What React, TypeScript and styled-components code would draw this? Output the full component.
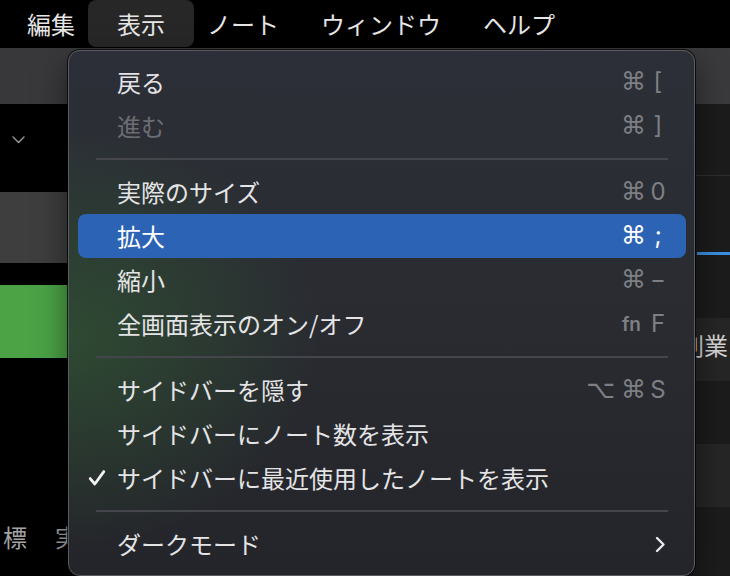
import React from "react";
import styled, { createGlobalStyle, css } from "styled-components";

const GlobalStyle = createGlobalStyle`
  html, body { margin: 0; padding: 0; background: #000; }
  body {
    font-family: "Noto Sans CJK JP", "Noto Sans", sans-serif;
    -webkit-font-smoothing: antialiased;
  }
  #root { height: 576px; }
`;

const Screen = styled.div`
  position: relative;
  width: 730px;
  height: 576px;
  overflow: hidden;
  display: grid;
  grid-template-rows: 48px 56px 1fr;
  background: #000;
`;

const MenuBar = styled.nav`
  display: flex;
  align-items: flex-start;
  padding-left: 6px;
  background: #000;
`;

const BarItem = styled.div<{ $active?: boolean }>`
  padding: 0 21px;
  font-size: 24px;
  line-height: 47px;
  height: 47px;
  color: #e6e6e6;
  border-radius: 8px;
  white-space: nowrap;
  ${(p) =>
    p.$active &&
    css`
      padding: 0 29px;
      margin: 0 -8px;
      background: #272727;
    `}
`;

const Toolbar = styled.div`
  background: linear-gradient(90deg, #38383a 0%, #3d3d3f 40%, #3a3a3c 100%);
`;

const Body = styled.div`
  display: grid;
  grid-template-columns: 300px 1fr;
  min-height: 0;
`;

const Sidebar = styled.aside`
  display: flex;
  flex-direction: column;
  background: #000;
`;

const SidebarHeader = styled.div`
  height: 88px;
  padding: 21px 0 0 12px;
  box-sizing: border-box;
`;

const SidebarBlock = styled.div<{ $tone: "gray" | "green"; $h: number }>`
  height: ${(p) => p.$h}px;
  background: ${(p) => (p.$tone === "gray" ? "#3e3e3e" : "#4ba346")};
`;

const Spacer = styled.div<{ $h: number }>`
  height: ${(p) => p.$h}px;
`;

const TagRow = styled.div`
  margin-top: auto;
  padding: 0 0 15px 3px;
  display: flex;
  gap: 28px;
  font-size: 24px;
  line-height: 48px;
  color: #a3a3a3;
`;

const Content = styled.section`
  display: flex;
  flex-direction: column;
  background: #1c1c1c;
`;

const ContentHeader = styled.div`
  height: 71px;
  border-bottom: 1px solid #2f2f2f;
`;

const TabArea = styled.div`
  height: 142px;
  padding-top: 76px;
  box-sizing: border-box;
`;

const TabUnderline = styled.div`
  height: 3px;
  margin-left: 397px;
  background: #3b8fe2;
`;

const ListRow = styled.div<{ $alt?: boolean }>`
  height: 63px;
  padding: 10px 0 0 20px;
  box-sizing: border-box;
  background: ${(p) => (p.$alt ? "#262626" : "#1c1c1c")};
  font-size: 24px;
  line-height: 34px;
  color: #d6d6d6;
  white-space: nowrap;
  overflow: hidden;
`;

const Menu = styled.div`
  position: absolute;
  left: 68px;
  top: 50px;
  width: 627px;
  height: 526px;
  box-sizing: border-box;
  padding: 9px 0;
  border: 1px solid #5b5c61;
  border-radius: 12px;
  background:
    radial-gradient(ellipse 250px 210px at 0px 285px, rgba(52, 112, 52, 0.45), rgba(52, 110, 52, 0) 100%),
    linear-gradient(180deg, #2c2f37 0%, #2a2c32 45%, #24252a 100%);
  box-shadow: 0 0 0 1px rgba(0, 0, 0, 0.75), 0 12px 32px rgba(0, 0, 0, 0.5);
  display: flex;
  flex-direction: column;
`;

const Row = styled.div<{ $highlighted?: boolean; $disabled?: boolean }>`
  height: 44px;
  flex: none;
  margin: 0 8px 0 9px;
  padding: 0 19px 0 10px;
  display: flex;
  align-items: center;
  border-radius: 8px;
  font-size: 24px;
  color: ${(p) => (p.$disabled ? "#6c6d72" : "#e4e4e6")};
  background: ${(p) => (p.$highlighted ? "#2c63b4" : "transparent")};
  ${(p) => p.$highlighted && css`color: #ffffff;`}
`;

const Check = styled.span`
  width: 29px;
  flex: none;
  display: flex;
  align-items: center;
`;

const Label = styled.span`
  white-space: nowrap;
  line-height: 44px;
  margin-right: auto;
`;

const Separator = styled.div`
  flex: none;
  height: 2px;
  margin: 10px 26px 10px 27px;
  background: #45464b;
`;

const Shortcut = styled.span<{ $on?: boolean }>`
  display: flex;
  align-items: center;
  gap: 3px;
  height: 44px;
  color: ${(p) => (p.$on ? "#ffffff" : "#7e7f84")};
`;

const Mods = styled.span`
  display: flex;
  align-items: center;
  gap: 6px;
  font-family: "DejaVu Sans", sans-serif;
  font-size: 25px;
  line-height: 30px;
`;

const Fn = styled.span`
  font-family: "Inter", "Liberation Sans", sans-serif;
  font-size: 19px;
  font-weight: 600;
  line-height: 30px;
  padding-top: 2px;
  margin-right: 5px;
`;

const Key = styled.span`
  width: 18px;
  text-align: center;
  font-family: "Inter", "Liberation Sans", sans-serif;
  font-size: 24px;
  line-height: 30px;
`;

const ChevronCell = styled.span`
  width: 18px;
  display: flex;
  justify-content: flex-end;
  padding-right: 1px;
`;

type Item = {
  label: string;
  mods?: string[];
  fn?: boolean;
  keyChar?: string;
  disabled?: boolean;
  highlighted?: boolean;
  checked?: boolean;
  submenu?: boolean;
};

const groups: Item[][] = [
  [
    { label: "戻る", mods: ["⌘"], keyChar: "[" },
    { label: "進む", mods: ["⌘"], keyChar: "]", disabled: true },
  ],
  [
    { label: "実際のサイズ", mods: ["⌘"], keyChar: "0" },
    { label: "拡大", mods: ["⌘"], keyChar: ";", highlighted: true },
    { label: "縮小", mods: ["⌘"], keyChar: "−" },
    { label: "全画面表示のオン/オフ", fn: true, keyChar: "F" },
  ],
  [
    { label: "サイドバーを隠す", mods: ["⌥", "⌘"], keyChar: "S" },
    { label: "サイドバーにノート数を表示" },
    { label: "サイドバーに最近使用したノートを表示", checked: true },
  ],
  [{ label: "ダークモード", submenu: true }],
];

const CheckIcon = () => (
  <svg width="18" height="18" viewBox="0 0 18 18">
    <polyline
      points="2.2,9.6 6.8,15 15.8,2.6"
      fill="none"
      stroke="#f2f2f2"
      strokeWidth="2.8"
      strokeLinecap="round"
      strokeLinejoin="round"
    />
  </svg>
);

const ChevronRight = () => (
  <svg width="11" height="17" viewBox="0 0 11 17">
    <polyline
      points="2,2 8.5,8.5 2,15"
      fill="none"
      stroke="#e8e8ea"
      strokeWidth="2.4"
      strokeLinecap="round"
      strokeLinejoin="round"
    />
  </svg>
);

const ChevronDown = () => (
  <svg width="13" height="8" viewBox="0 0 13 8">
    <polyline
      points="1,1 6.5,6.5 12,1"
      fill="none"
      stroke="#9a9a9a"
      strokeWidth="1.4"
      strokeLinecap="round"
      strokeLinejoin="round"
    />
  </svg>
);

const MenuRow = ({ item }: { item: Item }) => (
  <Row $highlighted={item.highlighted} $disabled={item.disabled}>
    <Check>{item.checked && <CheckIcon />}</Check>
    <Label>{item.label}</Label>
    {item.submenu ? (
      <ChevronCell>
        <ChevronRight />
      </ChevronCell>
    ) : item.keyChar ? (
      <Shortcut $on={item.highlighted}>
        {item.mods && (
          <Mods>
            {item.mods.map((m) => (
              <span key={m}>{m}</span>
            ))}
          </Mods>
        )}
        {item.fn && <Fn>fn</Fn>}
        <Key>{item.keyChar}</Key>
      </Shortcut>
    ) : null}
  </Row>
);

export default function App() {
  return (
    <>
      <GlobalStyle />
      <Screen>
        <MenuBar>
          <BarItem>編集</BarItem>
          <BarItem $active>表示</BarItem>
          <BarItem>ノート</BarItem>
          <BarItem>ウィンドウ</BarItem>
          <BarItem>ヘルプ</BarItem>
        </MenuBar>
        <Toolbar />
        <Body>
          <Sidebar>
            <SidebarHeader>
              <ChevronDown />
            </SidebarHeader>
            <SidebarBlock $tone="gray" $h={71} />
            <Spacer $h={22} />
            <SidebarBlock $tone="green" $h={73} />
            <TagRow>
              <span>標</span>
              <span>実</span>
            </TagRow>
          </Sidebar>
          <Content>
            <ContentHeader />
            <TabArea>
              <TabUnderline />
            </TabArea>
            <ListRow $alt>二〇二四年度の事業計画と会社の創業</ListRow>
            <ListRow />
            <ListRow $alt />
            <ListRow />
          </Content>
        </Body>
        <Menu>
          {groups.map((g, gi) => (
            <React.Fragment key={gi}>
              {gi > 0 && <Separator />}
              {g.map((it) => (
                <MenuRow key={it.label} item={it} />
              ))}
            </React.Fragment>
          ))}
        </Menu>
      </Screen>
    </>
  );
}
